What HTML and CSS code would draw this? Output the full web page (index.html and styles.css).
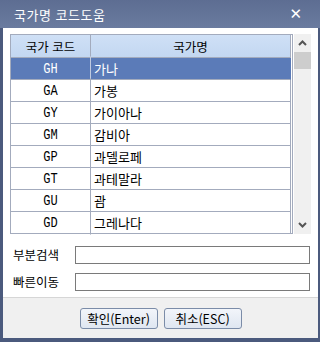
FILE: index.html
```html
<!DOCTYPE html>
<html lang="ko">
<head>
    <meta charset="UTF-8">
    <title>국가명 코드도움</title>
    <link rel="stylesheet" href="styles.css">
</head>
<body>
    <div class="window">
        <div class="titlebar">
            <div class="title">국가명 코드도움</div>
            <div class="close">✕</div>
        </div>

        <div class="content">
            <div class="list-wrap">
                <div class="grid">
                    <div class="row head">
                        <div class="cell code">국가 코드</div>
                        <div class="cell name">국가명</div>
                    </div>
                    <div class="row selected">
                        <div class="cell code">GH</div>
                        <div class="cell name">가나</div>
                    </div>
                    <div class="row">
                        <div class="cell code">GA</div>
                        <div class="cell name">가봉</div>
                    </div>
                    <div class="row">
                        <div class="cell code">GY</div>
                        <div class="cell name">가이아나</div>
                    </div>
                    <div class="row">
                        <div class="cell code">GM</div>
                        <div class="cell name">감비아</div>
                    </div>
                    <div class="row">
                        <div class="cell code">GP</div>
                        <div class="cell name">과델로페</div>
                    </div>
                    <div class="row">
                        <div class="cell code">GT</div>
                        <div class="cell name">과테말라</div>
                    </div>
                    <div class="row">
                        <div class="cell code">GU</div>
                        <div class="cell name">괌</div>
                    </div>
                    <div class="row last">
                        <div class="cell code">GD</div>
                        <div class="cell name">그레나다</div>
                    </div>
                </div>

                <!-- scrollbar -->
                <div class="scrollbar">
                    <div class="arrow">
                        <svg width="9" height="6" viewBox="0 0 9 6"><path d="M1 5 L4.5 1.5 L8 5" fill="none" stroke="#555" stroke-width="2"/></svg>
                    </div>
                    <div class="thumb"></div>
                    <div class="track"></div>
                    <div class="arrow">
                        <svg width="9" height="6" viewBox="0 0 9 6"><path d="M1 1 L4.5 4.5 L8 1" fill="none" stroke="#555" stroke-width="2"/></svg>
                    </div>
                </div>
            </div>

            <div class="fields">
                <div class="field">
                    <label>부분검색</label>
                    <input type="text" class="input">
                </div>
                <div class="field">
                    <label>빠른이동</label>
                    <input type="text" class="input">
                </div>
            </div>
        </div>

        <div class="footer">
            <button class="btn">확인(Enter)</button>
            <button class="btn">취소(ESC)</button>
        </div>
    </div>
</body>
</html>
```

FILE: styles.css
```css
body {
    margin: 0;
    font-family: "Noto Sans CJK KR", "Noto Sans", sans-serif;
    font-size: 12px;
    color: #000;
}
.window {
    width: 320px;
    height: 342px;
    display: flex;
    flex-direction: column;
    background-color: #4b5a7d;
    box-sizing: border-box;
    padding-bottom: 4px;
}
.titlebar {
    height: 28px;
    display: flex;
    align-items: center;
    justify-content: space-between;
    padding: 0 18px 0 14px;
    background: linear-gradient(#5d6d92, #6a7b9f);
    color: white;
    flex-shrink: 0;
}
.title {
    font-size: 13px;
    letter-spacing: 0.5px;
}
.close {
    font-size: 15px;
    font-weight: bold;
    font-family: "DejaVu Sans", sans-serif;
}
.content {
    margin: 0 2px 0 3px;
    background-color: white;
    padding: 6px 7px 0 7px;
    height: 269px;
    box-sizing: border-box;
}
.list-wrap {
    display: flex;
    height: 200px;
}
.grid {
    width: 283px;
    border: 1px solid #a3abbd;
    box-sizing: border-box;
    padding-right: 1px;
}
.row {
    display: grid;
    grid-template-columns: 80px 1fr;
    height: 22px;
    border-bottom: 1px solid #a3abbd;
    border-right: 1px solid #a3abbd;
    box-sizing: border-box;
}
.row.last {
    height: 21px;
    border-bottom: none;
}
.cell {
    display: flex;
    align-items: center;
    box-sizing: border-box;
}
.cell.code {
    justify-content: center;
    border-right: 1px solid #a3abbd;
    font-family: "Liberation Mono", monospace;
    font-size: 12px;
    transform: scaleY(1.15);
}
.cell.name {
    padding-left: 3px;
    font-size: 13px;
}
.row.head {
    height: 23px;
    background: linear-gradient(#cfe0f6, #c3d7f1);
}
.row.head .cell {
    justify-content: center;
    font-family: "Noto Sans CJK KR", sans-serif;
    font-size: 12.5px;
    transform: none;
    padding-left: 0;
}
.row.selected {
    background-color: #5b7bb8;
    color: white;
    border-right-color: #5b7bb8;
}
.row.selected .cell.code {
    border-right-color: #c0cbe0;
}
.scrollbar {
    width: 17px;
    margin-left: 1px;
    background-color: #f0f0f0;
    display: flex;
    flex-direction: column;
}
.arrow {
    height: 18px;
    display: flex;
    align-items: center;
    justify-content: center;
}
.thumb {
    height: 17px;
    background-color: #cdcdcd;
}
.track {
    flex: 1;
}
.fields {
    display: flex;
    flex-direction: column;
    gap: 8px;
    padding-top: 11px;
}
.field {
    display: flex;
    align-items: center;
}
.field label {
    width: 65px;
    padding-left: 3px;
    box-sizing: border-box;
    font-size: 12.5px;
}
.input {
    width: 235px;
    height: 18px;
    margin: 0;
    padding: 0 3px;
    border: 1px solid #7a7a7a;
    box-sizing: border-box;
    outline: none;
}
.footer {
    margin: 0 2px 0 3px;
    flex: 1;
    background-color: #f0f0f0;
    border-top: 1px solid #d6d6d6;
    display: flex;
    justify-content: center;
    align-items: flex-start;
    gap: 6px;
    padding-top: 10px;
    box-sizing: border-box;
}
.btn {
    width: 78px;
    height: 21px;
    margin: 0;
    padding: 0;
    border: 1px solid #7b8ca8;
    border-radius: 3px;
    background: linear-gradient(#f2f5fa, #dfe6f1);
    font-family: "Noto Sans CJK KR", sans-serif;
    font-size: 12.5px;
    color: #000;
}
```
